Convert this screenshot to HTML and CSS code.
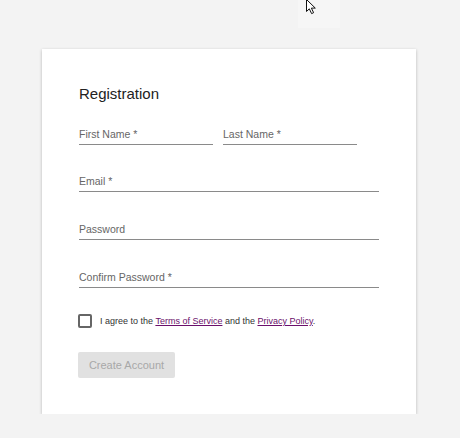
FILE: index.html
```html
<!DOCTYPE html>
<html>
<head>
<meta charset="utf-8">
<link rel="stylesheet" href="styles.css">
</head>
<body>
<div class="page">
  <form class="card">
    <h1 class="title">Registration</h1>
    <div class="row">
      <div class="field half"><span class="label">First Name *</span></div>
      <div class="field half"><span class="label">Last Name *</span></div>
    </div>
    <div class="field email"><span class="label">Email *</span></div>
    <div class="field"><span class="label">Password</span></div>
    <div class="field"><span class="label">Confirm Password *</span></div>
    <label class="agree">
      <span class="box"></span>
      <span class="agree-text">I agree to the <a href="#">Terms of Service</a> and the <a href="#">Privacy Policy</a>.</span>
    </label>
    <button type="button" class="btn">Create Account</button>
  </form>
</div>
<div class="cursor-glow"></div>
<svg class="cursor" width="14" height="16" viewBox="0 0 14 16">
  <path d="M1.5 0.5 L1.5 12.5 L4.3 9.8 L6.6 14.6 L8.6 13.7 L6.4 9.1 L10.3 9.1 Z" fill="#fff" stroke="#111" stroke-width="1" stroke-linejoin="miter"/>
</svg>
</body>
</html>
```
FILE: styles.css
```css
html, body {
  margin: 0;
  padding: 0;
  background: #f3f3f3;
  font-family: "Liberation Sans", Arial, sans-serif;
}
.page {
  padding: 49px 0 0 42px;
}
.card {
  width: 300px;
  padding: 36px 37px 36px 37px;
  background: #fff;
  box-shadow: 0 1px 3px rgba(0,0,0,0.25);
  display: flex;
  flex-direction: column;
}
.title {
  margin: 0;
  font-size: 15px;
  font-weight: normal;
  color: #222;
  line-height: 18px;
}
.row {
  display: flex;
  gap: 10px;
  margin-top: 25px;
}
.field {
  border-bottom: 1px solid #8a8a8a;
  padding-bottom: 3px;
  margin-top: 31px;
}
.field.email {
  margin-top: 30px;
}
.row .field {
  margin-top: 0;
}
.half {
  width: 134px;
}
.label {
  display: block;
  font-size: 10.5px;
  line-height: 13px;
  color: #666;
}
.agree {
  display: flex;
  align-items: center;
  margin-top: 26px;
  margin-left: -1px;
  gap: 8px;
}
.box {
  width: 10px;
  height: 10px;
  border: 2px solid #666;
  border-radius: 2px;
}
.agree-text {
  font-size: 9px;
  line-height: 14px;
  color: #333;
}
.agree-text a {
  color: #6b0f6b;
}
.btn {
  align-self: flex-start;
  margin-top: 24px;
  margin-left: -1px;
  width: 97px;
  height: 26px;
  border: none;
  border-radius: 2px;
  background: #e1e1e1;
  color: #a8a8a8;
  font-family: "Liberation Sans", Arial, sans-serif;
  font-size: 11px;
  padding: 0;
}
.cursor-glow {
  position: absolute;
  left: 298px;
  top: 0;
  width: 42px;
  height: 28px;
  background: #f6f6f6;
}
.cursor {
  position: absolute;
  left: 305px;
  top: -1px;
}
```
